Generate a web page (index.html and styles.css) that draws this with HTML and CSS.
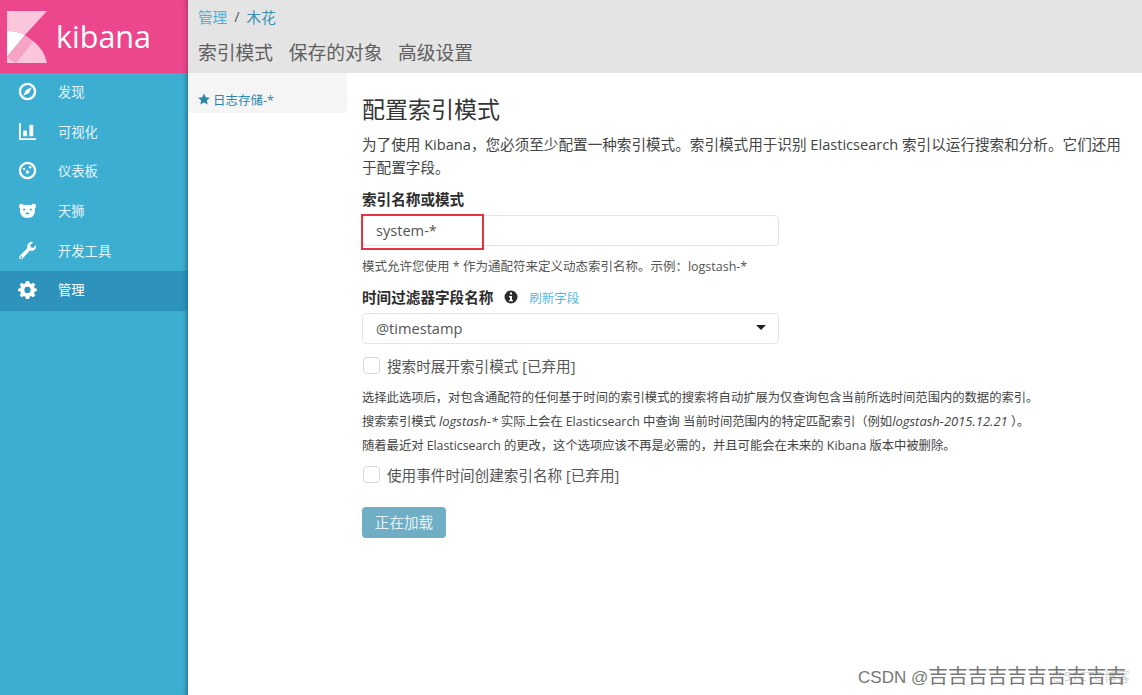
FILE: index.html
```html
<!DOCTYPE html>
<html>
<head>
	<title>Kibana</title>
	<link rel="stylesheet" href="styles.css">
</head>
<body>
	<div class="sidebar">
		<div class="brand">
			<svg class="brand-logo" width="40" height="52" viewBox="7 11 40 52">
				<path d="M7 11H47L25 35Q17 31 7 31Z" fill="#f9c6db"/>
				<path d="M7 31Q17 31 25 35L7 57Z" fill="#fff"/>
				<path d="M25 35L33 41L16 63L7 57Z" fill="#f5a4c6"/>
				<path d="M33 41Q44 49 47 63H16Z" fill="#f9c6db"/>
				<path d="M7 57L16 63H7Z" fill="#f9c6db"/>
			</svg>
			<span class="brand-name">kibana</span>
		</div>
		<a class="nav-item">
			<svg class="nav-icon" viewBox="0 0 20 20"><circle cx="10" cy="10" r="8" fill="none" stroke="#fff" stroke-width="2.4"/><path d="M14.5 5.5L11.6 11.6L5.5 14.5L8.4 8.4Z" fill="#fff"/></svg>
			<span>发现</span>
		</a>
		<a class="nav-item">
			<svg class="nav-icon" viewBox="0 0 20 20"><path d="M1 1H3V17H19V19H1Z" fill="#fff"/><rect x="5.5" y="9" width="4" height="6" fill="#fff"/><rect x="12" y="3" width="4" height="12" fill="#fff"/></svg>
			<span>可视化</span>
		</a>
		<a class="nav-item">
			<svg class="nav-icon" viewBox="0 0 20 20"><circle cx="10" cy="10" r="8" fill="none" stroke="#fff" stroke-width="2.4"/><circle cx="10" cy="11.500" r="1.800" fill="#fff"/><circle cx="6.500" cy="8.500" r="1.200" fill="#fff"/><circle cx="12.800" cy="6.500" r="1.300" fill="#fff"/></svg>
			<span>仪表板</span>
		</a>
		<a class="nav-item">
			<svg class="nav-icon" viewBox="0 0 20 20"><path d="M1 5.500Q1 3 3.500 3Q5 3 6 4.500Q10 3.500 14 4.500Q15 3 16.500 3Q19 3 19 5.500Q19 7 17.800 8Q18.500 14 15 16.500Q10 19 5 16.500Q1.500 14 2.200 8Q1 7 1 5.500Z" fill="#fff"/><circle cx="6.500" cy="9" r="1.200" fill="#3caed2"/><circle cx="13.500" cy="9" r="1.200" fill="#3caed2"/><path d="M7.500 14Q10 9.500 12.500 14Z" fill="#3caed2"/></svg>
			<span>天狮</span>
		</a>
		<a class="nav-item">
			<svg class="nav-icon" viewBox="0 0 20 20"><path d="M19 5.500Q19 9.500 15 10.200Q13.500 10.500 12.500 10L4.800 18.500Q3.500 19.700 2 18.800Q.5 17.500 1.500 16L9.800 7.500Q9 4 11.500 2Q13.500 .5 16 1L12.800 4.200L13.500 6.700L16 7.300L18.800 4.300Q19 4.800 19 5.500Z" fill="#fff"/><circle cx="3.400" cy="17" r="1" fill="#3caed2"/></svg>
			<span>开发工具</span>
		</a>
		<a class="nav-item active">
			<svg class="nav-icon" viewBox="0 0 20 20"><path fill-rule="evenodd" d="M8.300 1H11.700L12.200 3.400L13.900 4.100L16 2.800L18.200 5L16.900 7.100L17.600 8.800L20 9.300V11.700L17.600 12.200L16.900 13.900L18.200 16L16 18.200L13.900 16.900L12.200 17.600L11.700 20H8.300L7.800 17.600L6.100 16.900L4 18.200L1.800 16L3.100 13.900L2.400 12.200L0 11.700V9.300L2.400 8.800L3.100 7.100L1.800 5L4 2.800L6.100 4.100L7.800 3.400ZM10 7.200A3.300 3.300 0 1 0 10 13.800A3.300 3.300 0 1 0 10 7.200Z" fill="#fff"/></svg>
			<span>管理</span>
		</a>
	</div>

	<div class="main">
		<div class="topbar">
			<div class="crumbs"><a class="crumb-first">管理</a><span class="crumb-sep">/</span><a class="crumb-last">木花</a></div>
			<div class="tabs">
				<a>索引模式</a>
				<a>保存的对象</a>
				<a>高级设置</a>
			</div>
		</div>
		<div class="body-row">
			<div class="patterns">
				<div class="pattern-item">
					<svg class="star" width="12" height="12" viewBox="0 0 20 20"><path d="M10 .8L13 7L19.800 7.900L14.800 12.600L16.100 19.300L10 16L3.900 19.300L5.200 12.600L.2 7.900L7 7Z" fill="#2f87ab"/></svg>
					<span>日志存储-*</span>
				</div>
			</div>
			<div class="content">
				<h1 class="title">配置索引模式</h1>
				<p class="intro">为了使用 Kibana，您必须至少配置一种索引模式。索引模式用于识别 Elasticsearch 索引以运行搜索和分析。它们还用于配置字段。</p>

				<div class="label first-label">索引名称或模式</div>
				<div class="input-wrap">
					<div class="field">system-*</div>
					<div class="red-box"></div>
				</div>
				<div class="help">模式允许您使用 * 作为通配符来定义动态索引名称。示例：logstash-*</div>

				<div class="label-row">
					<span class="label">时间过滤器字段名称</span>
					<svg class="info" width="14" height="14" viewBox="0 0 14 14"><circle cx="7" cy="7" r="6.500" fill="#2d2d2d"/><rect x="6" y="2.500" width="2" height="2" fill="#fff"/><path d="M5 6H8V10H9V11.200H5V10H6V7.200H5Z" fill="#fff"/></svg>
					<a class="refresh">刷新字段</a>
				</div>
				<div class="field select">
					<span>@timestamp</span>
					<i class="caret"></i>
				</div>

				<div class="check-row first-check">
					<span class="check"></span>
					<span>搜索时展开索引模式 [已弃用]</span>
				</div>
				<div class="notes">
					<div class="note-line">选择此选项后，对包含通配符的任何基于时间的索引模式的搜索将自动扩展为仅查询包含当前所选时间范围内的数据的索引。</div>
					<div class="note-line">搜索索引模式 <em>logstash-*</em> 实际上会在 Elasticsearch 中查询 当前时间范围内的特定匹配索引（例如<em>logstash-2015.12.21</em> ）。</div>
					<div class="note-line">随着最近对 Elasticsearch 的更改，这个选项应该不再是必需的，并且可能会在未来的 Kibana 版本中被删除。</div>
				</div>
				<div class="check-row">
					<span class="check"></span>
					<span>使用事件时间创建索引名称 [已弃用]</span>
				</div>
				<button class="btn">正在加载</button>
			</div>
		</div>
	</div>

	<div class="mark">CSDN @<span class="mark-name">吉吉吉吉吉吉吉吉吉吉</span></div>
	<div class="mark-faint">@51CTO博客</div>
</body>
</html>
```

FILE: styles.css
```css
* {
	box-sizing: border-box;
}

html, body {
	height: 100%;
}

body {
	margin: 0;
	display: flex;
	overflow: hidden;
	background-color: #fff;
	color: #444;
	font-family: "Open Sans", "Noto Sans CJK SC", sans-serif;
	font-size: 14.6px;
}

.sidebar {
	width: 188px;
	flex: none;
	background-color: #3caed2;
	box-shadow: inset -5px 0 4px -3px rgba(0, 0, 0, 0.3);
}

.brand {
	height: 73px;
	display: flex;
	align-items: center;
	gap: 9px;
	padding-left: 7px;
	background-color: #ec478c;
	box-shadow: inset -4px 0 4px -3px rgba(0, 0, 0, 0.3);
}

.brand-name {
	color: #fff;
	font-size: 30.500px;
	font-weight: 500;
	line-height: 1;
}

.nav-item {
	height: 39.6px;
	display: flex;
	align-items: center;
	padding: 0 0 2px 18px;
	color: #e4f5fb;
	font-size: 13.300px;
}

.nav-item.active {
	background-color: #2d93bd;
	color: #fff;
	box-shadow: inset -5px 0 4px -3px rgba(0, 0, 0, 0.2);
}

.nav-icon {
	width: 19px;
	height: 19px;
	margin-right: 21px;
	flex: none;
}

.main {
	flex: 1;
	min-width: 0;
	display: flex;
	flex-direction: column;
}

.topbar {
	height: 73px;
	padding: 6px 10px 0;
	background-color: #e4e4e4;
}

.crumbs {
	display: flex;
	align-items: center;
	height: 20px;
	font-size: 14.6px;
}

.crumb-first {
	color: #4fb0d4;
}

.crumb-sep {
	margin: 0 7px;
	color: #555;
}

.crumb-last {
	color: #3b8fb0;
}

.tabs {
	display: flex;
	gap: 15.500px;
	margin-top: 13px;
	font-size: 18.800px;
	line-height: 28px;
	color: #5f5f5f;
}

.body-row {
	flex: 1;
	display: flex;
}

.patterns {
	width: 159px;
	flex: none;
}

.pattern-item {
	height: 40px;
	display: flex;
	align-items: center;
	gap: 3px;
	padding: 12px 0 0 10px;
	background-color: #f5f5f5;
	color: #2f87ab;
	font-size: 12.500px;
}

.content {
	flex: 1;
	padding: 0 15px;
}

.title {
	margin: 20px 0 0;
	font-size: 23px;
	font-weight: 400;
	line-height: 32px;
	color: #333;
}

.intro {
	margin: 8px 0 0;
	width: 770px;
	line-height: 23px;
	color: #444;
}

.label {
	font-weight: 700;
	color: #2d2d2d;
	font-size: 14.6px;
	line-height: 20px;
}

.first-label {
	margin-top: 10px;
}

.input-wrap {
	position: relative;
	margin-top: 6px;
}

.field {
	width: 417px;
	height: 31px;
	padding: 0 0 2px 13px;
	display: flex;
	align-items: center;
	border: 1px solid #e4e4e4;
	border-radius: 4px;
	color: #555;
	font-size: 14.6px;
}

.red-box {
	position: absolute;
	left: -1px;
	top: -1px;
	width: 123px;
	height: 36px;
	border: 2px solid #e5323e;
}

.help {
	margin-top: 11px;
	font-size: 12.500px;
	line-height: 20px;
	color: #555;
}

.label-row {
	display: flex;
	align-items: center;
	margin-top: 10px;
	height: 20px;
}

.info {
	margin-left: 11px;
}

.refresh {
	margin-left: 11px;
	color: #5bb8dc;
	font-size: 12.500px;
}

.select {
	margin-top: 6px;
	justify-content: space-between;
	padding-right: 12px;
}

.caret {
	width: 0;
	height: 0;
	border-left: 5px solid transparent;
	border-right: 5px solid transparent;
	border-top: 5px solid #222;
}

.check-row {
	display: flex;
	align-items: center;
	gap: 7px;
	height: 20px;
	color: #555;
}

.first-check {
	margin-top: 11px;
}

.check {
	width: 17px;
	height: 17px;
	margin-left: 1px;
	border: 1px solid #d9d9d9;
	border-radius: 4px;
	background-color: #fff;
}

.notes {
	margin-top: 11px;
	font-size: 12.300px;
	color: #444;
}

.note-line {
	height: 24px;
	line-height: 24px;
}

.notes em {
	font-size: 13px;
	line-height: 1;
}

.notes + .check-row {
	margin-top: 6px;
}

.btn {
	display: block;
	margin-top: 23px;
	width: 84px;
	height: 31px;
	padding: 0 0 2px;
	border: 0;
	border-radius: 4px;
	background-color: #70aec5;
	color: #e6f2f6;
	font-family: inherit;
	font-size: 14.6px;
}

.mark {
	position: absolute;
	right: 16px;
	top: 664px;
	color: #777;
	font-family: "Liberation Sans", "Noto Sans CJK SC", sans-serif;
	font-size: 17px;
	line-height: 24px;
	white-space: nowrap;
}

.mark-name {
	font-size: 19.800px;
}

.mark-faint {
	position: absolute;
	right: 12px;
	top: 666px;
	color: rgba(120, 120, 120, 0.35);
	font-size: 13px;
	line-height: 20px;
}
```
